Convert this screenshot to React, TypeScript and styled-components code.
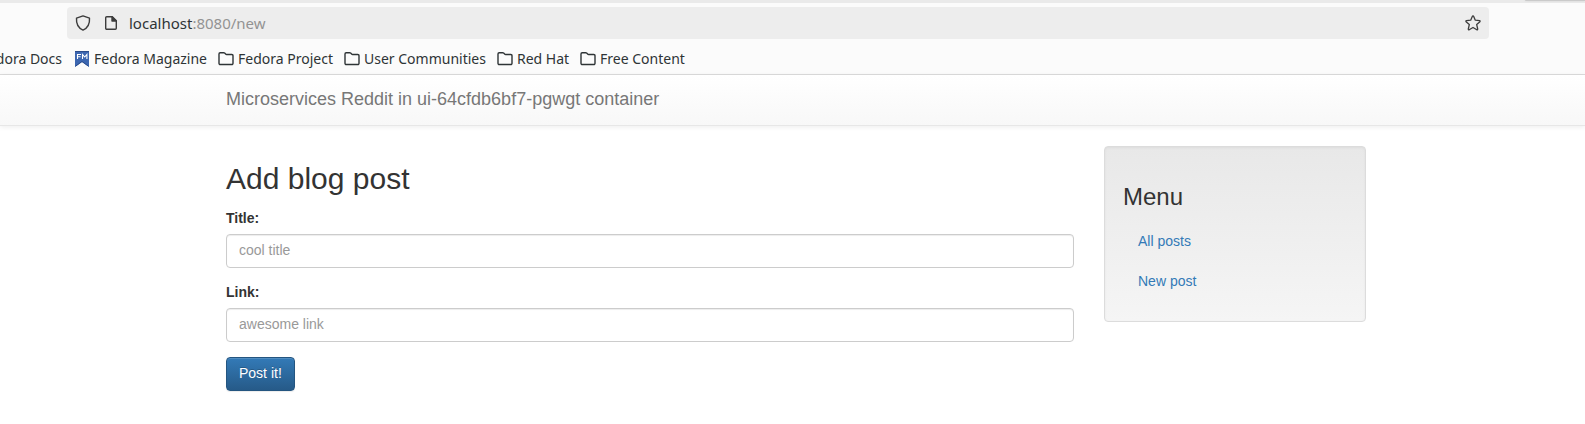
import React from "react";
import styled, { createGlobalStyle } from "styled-components";

const GlobalStyle = createGlobalStyle`
  *, *::before, *::after { box-sizing: border-box; }
  body {
    margin: 0;
    background: #fff;
    color: #333;
    font: 14px/20px "Liberation Sans", Arial, sans-serif;
    overflow-x: hidden;
  }
`;

const Chrome = styled.header`
  background: #fbfbfb;
  border-bottom: 1px solid #dcdcdc;
  color: #2e3436;
  font: 14px/20px "Noto Sans", sans-serif;
`;

const TabStrip = styled.div`
  display: flex;
  justify-content: flex-end;
  height: 3px;
  background: #eaeaea;
`;

const TabEdge = styled.div`
  width: 60px;
  height: 1px;
  border-bottom-left-radius: 4px;
  background: #cacaca;
  box-shadow: 0 0 2px #ccc;
`;

const AddressBar = styled.div`
  display: flex;
  align-items: center;
  height: 32px;
  margin: 4px 96px 0 67px;
  padding: 0 8px;
  border-radius: 4px;
  background: #ededed;
`;

const IconButton = styled.button`
  display: flex;
  width: 16px;
  height: 16px;
  margin: 0 11px 0 0;
  padding: 0;
  border: 0;
  background: none;
  color: #3c3c3c;

  &:last-child { margin: 0; }
`;

const Address = styled.div`
  flex: 1;
  font-size: 15px;
  color: #939393;
`;

const Host = styled.span`
  color: #2e3436;
`;

const Bookmarks = styled.nav`
  display: flex;
  align-items: center;
  gap: 11px;
  height: 35px;
  padding: 6px 0 2px;
  white-space: nowrap;
`;

const Bookmark = styled.a`
  display: flex;
  align-items: center;
  gap: 4px;
  color: inherit;
  text-decoration: none;

  svg { flex: none; }
`;

const ClippedBookmark = styled(Bookmark)`
  width: 63px;
  padding-right: 1px;
  justify-content: flex-end;
  overflow: hidden;
`;

const Navbar = styled.nav`
  padding-left: 7px;
  border-bottom: 1px solid #e7e7e7;
  background: linear-gradient(to bottom, #fff 0%, #f8f8f8 100%);
  box-shadow: 0 1px 5px rgba(0, 0, 0, 0.075);
`;

const Container = styled.div`
  max-width: 1170px;
  margin: 0 auto;
  padding: 0 15px;
`;

const Brand = styled.a`
  display: block;
  padding: 14px 0 16px;
  color: #777;
  font-size: 18px;
  text-decoration: none;
  text-shadow: 0 1px 0 rgba(255, 255, 255, 0.25);
`;

const Page = styled.main`
  padding: 20px 0 32px 7px;
`;

const Columns = styled.div`
  display: grid;
  grid-template-columns: minmax(0, 1fr) 262px;
  gap: 30px;
  align-items: start;
`;

const Title = styled.h2`
  margin: 16px 0 14px;
  font-size: 30px;
  line-height: 33px;
  font-weight: 500;
`;

const Field = styled.div`
  margin-bottom: 15px;
`;

const Label = styled.label`
  display: block;
  margin-bottom: 7px;
  line-height: 18px;
  font-weight: 700;
`;

const TextInput = styled.input`
  display: block;
  width: 100%;
  height: 34px;
  padding: 5px 12px 7px;
  border: 1px solid #ccc;
  border-radius: 4px;
  background: #fff;
  color: #555;
  font: inherit;
  box-shadow: inset 0 1px 1px rgba(0, 0, 0, 0.075);

  &::placeholder { color: #999; opacity: 1; }
`;

const SubmitButton = styled.button`
  padding: 5px 12px 7px;
  border: 1px solid #245580;
  border-radius: 4px;
  background: linear-gradient(to bottom, #337ab7 0%, #265a88 100%);
  color: #fff;
  font: inherit;
  text-shadow: 0 -1px 0 rgba(0, 0, 0, 0.2);
  box-shadow: inset 0 1px 0 rgba(255, 255, 255, 0.15), 0 1px 1px rgba(0, 0, 0, 0.075);
`;

const Well = styled.aside`
  padding: 19px 18px;
  border: 1px solid #dcdcdc;
  border-radius: 4px;
  background: linear-gradient(to bottom, #e8e8e8 0%, #f5f5f5 100%);
  box-shadow: inset 0 1px 3px rgba(0, 0, 0, 0.05), 0 1px 0 rgba(255, 255, 255, 0.1);
`;

const MenuTitle = styled.h3`
  margin: 18px 0 12px;
  font-size: 24px;
  line-height: 26px;
  font-weight: 500;
`;

const MenuList = styled.ul`
  margin: 0;
  padding: 0;
  list-style: none;
`;

const MenuLink = styled.a`
  display: block;
  padding: 9px 15px 11px;
  color: #337ab7;
  text-decoration: none;
`;

const ShieldIcon = () => (
  <svg width="16" height="16" viewBox="0 0 16 16" fill="none" stroke="currentColor" strokeWidth="1.4" strokeLinejoin="round">
    <path d="M8 .9 1.500 3.200C1.100 8.600 3.500 13 8 15.100c4.500-2.100 6.900-6.500 6.500-11.900z" />
  </svg>
);

const PageIcon = () => (
  <svg width="16" height="16" viewBox="0 0 16 16" fill="none" stroke="currentColor" strokeWidth="1.4" strokeLinejoin="round">
    <path d="M4.700 1.700h5.600l4 4v7.600a1 1 0 0 1-1 1H4.700a1 1 0 0 1-1-1V2.700a1 1 0 0 1 1-1z" />
    <path d="M10 1.700v4.300h4.300z" fill="currentColor" />
  </svg>
);

const StarIcon = () => (
  <svg width="16" height="16" viewBox="0 0 16 16" fill="none" stroke="currentColor" strokeWidth="1.300" strokeLinejoin="round">
    <path d="M8 .9q.5 0 .7.5l1.600 3.800 4.200.4q1 .3.400 1.100l-3.200 2.900 1 4.400q0 1-.9.800L8 12.500l-3.800 2.300q-.9.200-.9-.8l1-4.400L1.100 6.700q-.6-.8.400-1.100l4.200-.4 1.600-3.800q.2-.5.700-.5z" />
  </svg>
);

const FolderIcon = () => (
  <svg width="16" height="16" viewBox="0 0 16 16" fill="none" stroke="currentColor" strokeWidth="1.400" strokeLinejoin="round">
    <path d="M2.200 1.700h3.400q.6 0 1 .4l1 1q.4.400 1 .4h5.200a1.200 1.200 0 0 1 1.200 1.200v7.600a1.200 1.200 0 0 1-1.200 1.200H2.200A1.200 1.200 0 0 1 1 12.300V2.900a1.200 1.200 0 0 1 1.200-1.200z" />
  </svg>
);

const MagazineIcon = () => (
  <svg width="16" height="16" viewBox="0 0 16 16">
    <path d="M1 0h14v16l-7-5-7 5z" fill="#3c66b0" />
    <path d="M1 .5h14M1.500 15.200 8 10.500l6.500 4.700" fill="none" stroke="#2b4c8c" />
    <path d="M3.500 8V3.500H7M3.500 5.700h3M8.500 8V3.500l2.200 2.500 2.200-2.500V8" fill="none" stroke="#fff" strokeWidth="1.100" />
  </svg>
);

const folders = ["Fedora Project", "User Communities", "Red Hat", "Free Content"];

const fields = [
  { id: "title", label: "Title:", placeholder: "cool title" },
  { id: "link", label: "Link:", placeholder: "awesome link" },
];

const menu = [
  { href: "/", text: "All posts" },
  { href: "/new", text: "New post" },
];

export default function App() {
  return (
    <>
      <GlobalStyle />
      <Chrome>
        <TabStrip><TabEdge /></TabStrip>
        <AddressBar>
          <IconButton type="button" aria-label="Tracking protection"><ShieldIcon /></IconButton>
          <IconButton type="button" aria-label="Site information"><PageIcon /></IconButton>
          <Address><Host>localhost</Host>:8080/new</Address>
          <IconButton type="button" aria-label="Bookmark this page"><StarIcon /></IconButton>
        </AddressBar>
        <Bookmarks aria-label="Bookmarks">
          <ClippedBookmark href="#docs">Fedora Docs</ClippedBookmark>
          <Bookmark href="#magazine"><MagazineIcon />Fedora Magazine</Bookmark>
          {folders.map((name) => (
            <Bookmark href="#folder" key={name}><FolderIcon />{name}</Bookmark>
          ))}
        </Bookmarks>
      </Chrome>
      <Navbar>
        <Container>
          <Brand href="/">Microservices Reddit in ui-64cfdb6bf7-pgwgt container</Brand>
        </Container>
      </Navbar>
      <Page>
        <Container>
          <Columns>
            <form>
              <Title>Add blog post</Title>
              {fields.map((field) => (
                <Field key={field.id}>
                  <Label htmlFor={field.id}>{field.label}</Label>
                  <TextInput id={field.id} name={field.id} placeholder={field.placeholder} />
                </Field>
              ))}
              <SubmitButton type="button">Post it!</SubmitButton>
            </form>
            <Well>
              <MenuTitle>Menu</MenuTitle>
              <MenuList>
                {menu.map((item) => (
                  <li key={item.href}><MenuLink href={item.href}>{item.text}</MenuLink></li>
                ))}
              </MenuList>
            </Well>
          </Columns>
        </Container>
      </Page>
    </>
  );
}
